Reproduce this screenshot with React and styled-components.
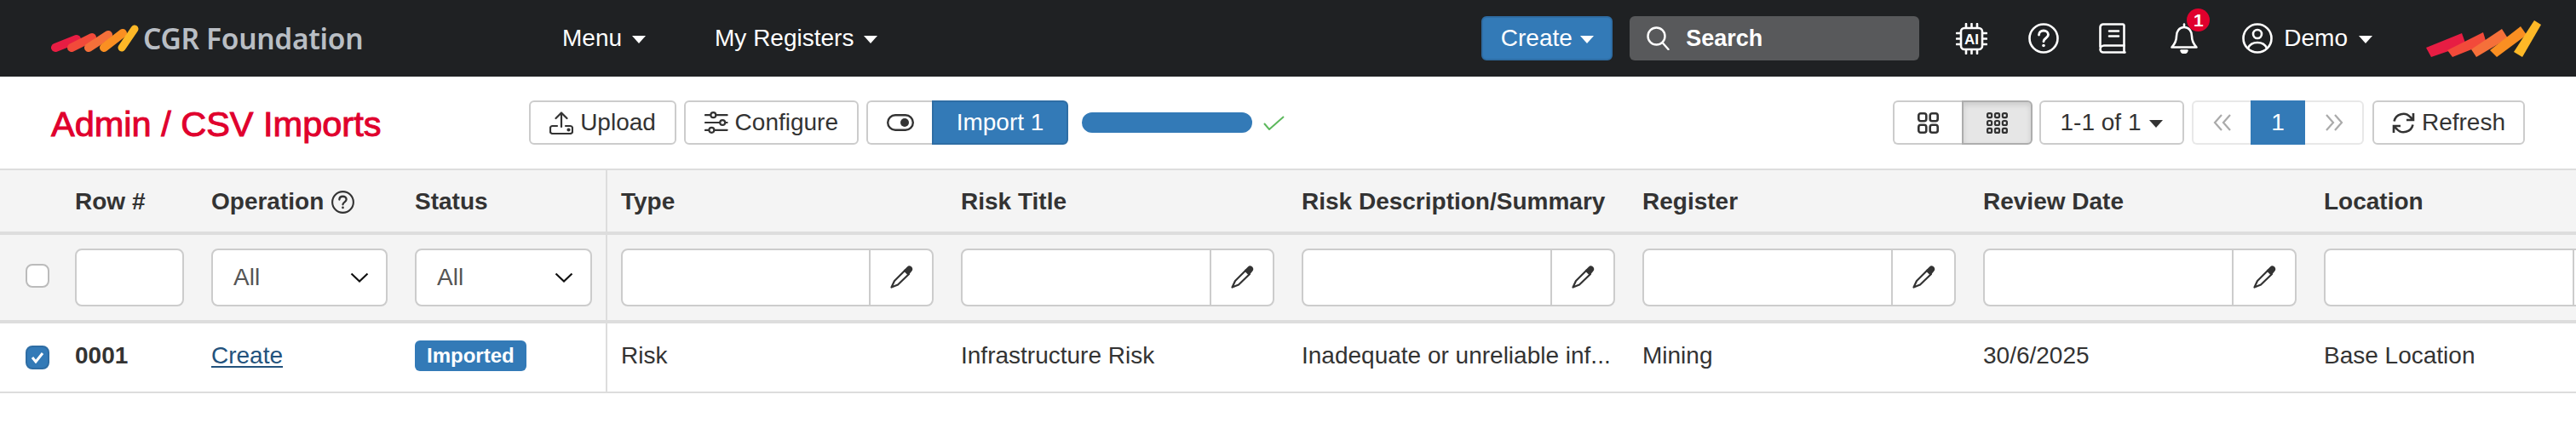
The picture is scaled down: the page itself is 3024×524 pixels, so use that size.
import React from "react";
import styled, { createGlobalStyle } from "styled-components";

const Global = createGlobalStyle`
  html, body { margin: 0; padding: 0; background: #fff; overflow: hidden; }
  body { font-family: "Liberation Sans", Arial, sans-serif; font-size: 28px; color: #333; }
  * { box-sizing: border-box; }
`;

const Page = styled.div`width: 3024px; height: 524px; overflow: hidden; background: #fff;`;

/* ---------- navbar ---------- */
const Navbar = styled.header`
  height: 90px; background: #1f2123; display: flex; align-items: center;
  padding: 0 41px 0 60px; color: #fff;
`;
const Brand = styled.div`display: flex; align-items: center; width: 600px; flex: none;`;
const BrandName = styled.span`
  font-family: "Noto Sans", sans-serif; font-size: 33.5px; font-weight: 600; color: #b9bec4;
  margin-left: 4px; letter-spacing: -0.3px; line-height: 40px;
`;
const NavLink = styled.span`
  display: inline-flex; align-items: center; gap: 12px; font-size: 28px; color: #fff;
  margin-right: ${(p) => p.$mr || 0}px; margin-top: -1px;
`;
const Caret = styled.i`
  display: inline-block; width: 0; height: 0; flex: none; margin-top: ${(p) => p.$mt ?? 3}px;
  border-left: 8px solid transparent; border-right: 8px solid transparent;
  border-top: 9px solid ${(p) => p.$color || "#fff"};
`;
const NavRight = styled.div`margin-left: auto; display: flex; align-items: center;`;
const CreateBtn = styled.button`
  width: 154px; height: 52px; background: #337ab7; border: 2px solid #2e6da4; border-radius: 6px;
  color: #fff; font: 28px "Liberation Sans", Arial, sans-serif; display: flex; align-items: center;
  justify-content: center; gap: 9px; padding: 0;
`;
const SearchBox = styled.div`
  width: 340px; height: 52px; background: #58595b; border-radius: 6px; margin: 0 43px 0 20px;
  display: flex; align-items: center; gap: 19px; padding-left: 20px; font-weight: 700; font-size: 27px;
`;
const NavIcons = styled.div`display: flex; align-items: center;`;
const IconSlot = styled.span`
  position: relative; display: flex; margin-right: ${(p) => p.$mr || 0}px;
`;
const Badge = styled.span`
  position: absolute; left: 19px; top: -17px; width: 27px; height: 27px; border-radius: 50%;
  background: #e0002d; color: #fff; font-weight: 700; font-size: 21px; line-height: 27px; text-align: center;
`;
const UserName = styled.span`
  display: inline-flex; align-items: center; gap: 13px; font-size: 28px; margin: 0 63px 0 13px;
`;

/* ---------- toolbar ---------- */
const Toolbar = styled.div`
  height: 108px; display: flex; align-items: flex-start; padding: 28px 60px 0;
`;
const Title = styled.h1`
  margin: 0; width: 561px; flex: none; font-size: 41.5px; font-weight: 400; color: #e0002d;
  line-height: 56px; -webkit-text-stroke: 1px #e0002d;
`;
const ToolGroup = styled.div`display: flex; align-items: center;`;
const Btn = styled.button`
  height: 52px; background: #fff; border: 2px solid #ccc; border-radius: 6px; color: #333;
  font: 28px "Liberation Sans", Arial, sans-serif; display: inline-flex; align-items: center;
  justify-content: center; gap: ${(p) => p.$gap ?? 8}px; padding: 0 ${(p) => p.$px ?? 22}px;
  width: ${(p) => (p.$w ? `${p.$w}px` : "auto")};
  margin-right: ${(p) => p.$mr || 0}px; flex: none;
`;
const ToggleBtn = styled(Btn)`
  width: 77px; border-right: 0; border-radius: 6px 0 0 6px; padding: 0;
`;
const ImportBtn = styled(Btn)`
  width: 160px; background: #337ab7; border-color: #2e6da4; color: #fff; border-radius: 0 6px 6px 0; padding: 0;
`;
const Progress = styled.div`
  width: 200px; height: 24px; border-radius: 12px; background: #337ab7; margin: 0 13px 0 16px;
`;
const RightTools = styled.div`margin-left: auto; display: flex; align-items: center;`;
const ViewBtn = styled.button`
  width: ${(p) => p.$w}px; height: 52px; display: flex; align-items: center; justify-content: center; padding: 0;
  background: ${(p) => (p.$active ? "#e6e6e6" : "#fff")}; color: #333;
  border: 2px solid ${(p) => (p.$active ? "#adadad" : "#ccc")};
  box-shadow: ${(p) => (p.$active ? "inset 0 3px 6px rgba(0,0,0,.125)" : "none")};
  border-radius: ${(p) => (p.$active ? "0 6px 6px 0" : "6px 0 0 6px")};
  ${(p) => (p.$active ? "" : "border-right: 0;")}
`;
const ViewGroup = styled.div`display: flex; margin-right: 8px;`;
const Pager = styled.div`display: flex; height: 52px; margin-right: 10px;`;
const PageArrow = styled.span`
  width: ${(p) => p.$w}px; display: flex; align-items: center; justify-content: center;
  border: 2px solid #e8e8e8; background: #fff; color: #aaa;
  border-radius: ${(p) => (p.$side === "left" ? "6px 0 0 6px" : "0 6px 6px 0")};
  ${(p) => (p.$side === "left" ? "border-right: 0;" : "border-left: 0;")}
`;
const PageCurrent = styled.span`
  width: 64px; background: #337ab7; color: #fff; display: flex; align-items: center; justify-content: center; font-size: 28px;
`;

/* ---------- table ---------- */
const COLS = "72px 160px 239px 242px 399px 400px 400px 400px 400px 400px";
const Table = styled.div`width: 3112px; border-top: 2px solid #ddd;`;
const Row = styled.div`
  display: grid; grid-template-columns: ${COLS};
  height: ${(p) => p.$h}px; background: ${(p) => p.$bg || "#fff"};
  border-bottom: ${(p) => p.$bb}px solid #ddd;
`;
const Cell = styled.div`
  display: flex; align-items: center; padding: 0 16px; min-width: 0;
  ${(p) => (p.$sep ? "border-right: 2px solid #ddd;" : "")}
`;
const HeadCell = styled(Cell)`font-weight: 700; gap: 9px; color: #333; padding-top: 2px;`;
const BodyCell = styled(Cell)`
  padding-bottom: 4px; font-weight: ${(p) => (p.$bold ? 700 : 400)}; white-space: nowrap;
`;
const CheckCell = styled.div`display: flex; align-items: center; padding: 0 0 ${(p) => p.$pb || 0}px 30px;`;
const Check = styled.span`
  width: 28px; height: 28px; border-radius: 8px; display: flex; align-items: center; justify-content: center;
  border: 2px solid ${(p) => (p.$on ? "#2e6da4" : "#bbb")}; background: ${(p) => (p.$on ? "#337ab7" : "#fff")};
`;
const FilterInput = styled.div`
  width: 100%; height: 68px; background: #fff; border: 2px solid #ccc; border-radius: 8px; flex: none;
`;
const FilterSelect = styled(FilterInput)`
  display: flex; align-items: center; justify-content: space-between; padding: 0 20px 0 24px; color: #555;
`;
const FilterGroup = styled(FilterInput)`
  display: flex; justify-content: flex-end;
`;
const Addon = styled.span`
  width: 74px; border-left: 2px solid #ccc; display: flex; align-items: center; justify-content: center;
`;
const Link = styled.a`color: #23527c; text-decoration: underline; text-underline-offset: 3px;`;
const Label = styled.span`
  display: inline-block; background: #337ab7; color: #fff; font-weight: 700; font-size: 24px;
  height: 36px; line-height: 36px; padding: 0 14px; border-radius: 6px;
`;

/* ---------- drawings ---------- */
const LogoSmall = () => (
  <svg width="104" height="34" viewBox="60 28 104 34" fill="none" strokeWidth="10" strokeLinecap="round">
    <path d="M65 56 L90 46" stroke="#e71d43" />
    <path d="M84 56 L108 44" stroke="#f24a3a" />
    <path d="M104 56 L127 41" stroke="#f5703a" />
    <path d="M122 56 L144 39" stroke="#fa8f22" />
    <path d="M143 56 L158 34" stroke="#fdb827" strokeWidth="9" />
  </svg>
);
const LogoLarge = () => (
  <svg width="135" height="43" viewBox="2848 23 135 43">
    <polygon points="2848,55 2890,38 2895,52 2854,66" fill="#e71d43" />
    <polygon points="2873,58 2915,37 2919,50 2879,66" fill="#f24a3a" />
    <polygon points="2901,57 2937,33 2944,44 2907,66" fill="#f5703a" />
    <polygon points="2923,58 2959,30 2966,40 2931,66" fill="#fa8f22" />
    <polygon points="2951,60 2975,23 2983,28 2961,66" fill="#fdb827" />
  </svg>
);
const AiIcon = () => (
  <svg width="37" height="37" viewBox="0 0 37 37" fill="none" stroke="#fff" strokeWidth="2.6" strokeLinecap="round">
    <rect x="6" y="6" width="25" height="25" rx="4" />
    <path d="M12 1v4M18.5 1v4M25 1v4M12 32v4M18.5 32v4M25 32v4M1 12h4M1 18.5h4M1 25h4M32 12h4M32 18.5h4M32 25h4" />
    <text x="18.5" y="24.5" textAnchor="middle" fill="#fff" stroke="none" fontFamily="Liberation Sans" fontWeight="700" fontSize="17">AI</text>
  </svg>
);
const QuestionIcon = ({ size = 36, color = "#fff", sw = 2.6 }) => (
  <svg width={size} height={size} viewBox="0 0 36 36" fill="none" stroke={color} strokeWidth={sw} strokeLinecap="round">
    <circle cx="18" cy="18" r="16.5" />
    <path d="M12.5 14c0-3.2 2.5-5 5.5-5s5.5 1.9 5.500 4.800c0 3.900-5.500 4-5.500 8" strokeWidth={sw * 1.1} />
    <circle cx="18" cy="26.5" r="1.8" fill={color} stroke="none" />
  </svg>
);
const BookIcon = () => (
  <svg width="32" height="36" viewBox="0 0 32 36" fill="none" stroke="#fff" strokeWidth="2.6" strokeLinecap="round" strokeLinejoin="round">
    <path d="M1.5 28V5a3.5 3.5 0 0 1 3.5-3.5h23a1.5 1.5 0 0 1 1.5 1.5v23.5H6a4.5 4.500 0 0 0-4.500 4.500 3.500 3.500 0 0 0 3.500 3.500h25.500" />
    <path d="M29.5 26.5v8M12 9.5h11M12 15.5h11" />
  </svg>
);
const BellIcon = () => (
  <svg width="32" height="36" viewBox="0 0 32 36" fill="none" stroke="#fff" strokeWidth="2.6" strokeLinecap="round" strokeLinejoin="round">
    <path d="M16 1.5v3.5M16 5C10 5 7 10 7 15.5c0 5-1.5 8.5-5.5 13h29c-4-4.5-5.5-8-5.5-13C25 10 22 5 16 5Z" />
    <path d="M12.500 32.500h7c-.5 1.800-2 2.500-3.500 2.500s-3-.7-3.500-2.500Z" fill="#fff" />
  </svg>
);
const AvatarIcon = () => (
  <svg width="36" height="36" viewBox="0 0 36 36" fill="none" stroke="#fff" strokeWidth="2.6" strokeLinecap="round">
    <circle cx="18" cy="18" r="16.5" />
    <circle cx="18" cy="13" r="5" />
    <path d="M7 29.500c2-4.500 6-6.500 11-6.500s9 2 11 6.500" />
  </svg>
);
const SearchIcon = () => (
  <svg width="27" height="28" viewBox="0 0 27 28" fill="none" stroke="#fff" strokeWidth="2.4" strokeLinecap="round">
    <circle cx="11.500" cy="11.500" r="10" />
    <path d="M18.500 19l7 8" />
  </svg>
);
const UploadIcon = () => (
  <svg width="28" height="27" viewBox="0 0 28 27" fill="none" stroke="#333" strokeWidth="2.2" strokeLinecap="round" strokeLinejoin="round">
    <path d="M14 1.500V18M7.500 8L14 1.500 20.500 8" />
    <path d="M9 17H3.500A2.500 2.500 0 0 0 1 19.500v4A2.500 2.500 0 0 0 3.500 26h21a2.500 2.500 0 0 0 2.500-2.500v-4a2.500 2.500 0 0 0-2.500-2.500H19" />
    <circle cx="22.500" cy="21.500" r="1" fill="#333" />
  </svg>
);
const SlidersIcon = () => (
  <svg width="28" height="26" viewBox="0 0 28 26" fill="none" stroke="#333" strokeWidth="2.2" strokeLinecap="round">
    <path d="M1 4h6M14 4h13M1 13h17M25 13h2M1 22h4M12 22h15" />
    <circle cx="10.500" cy="4" r="3" />
    <circle cx="21.500" cy="13" r="3" />
    <circle cx="8.500" cy="22" r="3" />
  </svg>
);
const ToggleIcon = () => (
  <svg width="32" height="20" viewBox="0 0 32 20" fill="none" stroke="#333" strokeWidth="2.400">
    <rect x="1.200" y="1.200" width="29.600" height="17.600" rx="8.800" />
    <circle cx="21" cy="10" r="5" fill="#333" stroke="none" />
  </svg>
);
const CheckMark = () => (
  <svg width="25" height="17" viewBox="0 0 25 17" fill="none" stroke="#5cb85c" strokeWidth="2">
    <path d="M1 9l6 7L24 1" />
  </svg>
);
const Grid2 = () => (
  <svg width="25" height="25" viewBox="0 0 25 25" fill="none" stroke="#333" strokeWidth="2.600">
    {[1.3, 14.7].map((y) => [1.3, 14.7].map((x) => <rect key={`${x}-${y}`} x={x} y={y} width="9" height="9" rx="2.500" />))}
  </svg>
);
const Grid3 = () => (
  <svg width="25" height="25" viewBox="0 0 25 25" fill="none" stroke="#333" strokeWidth="2.200">
    {[1.1, 10, 18.9].map((y) => [1.1, 10, 18.9].map((x) => <rect key={`${x}-${y}`} x={x} y={y} width="5" height="5" rx="1.500" />))}
  </svg>
);
const ChevronsLeft = () => (
  <svg width="22" height="20" viewBox="0 0 22 20" fill="none" stroke="#aaa" strokeWidth="2.200">
    <path d="M10 1L2 10l8 9M20 1l-8 9 8 9" />
  </svg>
);
const ChevronsRight = () => (
  <svg width="22" height="20" viewBox="0 0 22 20" fill="none" stroke="#aaa" strokeWidth="2.200">
    <path d="M12 1l8 9-8 9M2 1l8 9-8 9" />
  </svg>
);
const RefreshIcon = () => (
  <svg width="27" height="27" viewBox="0 0 27 27" fill="none" stroke="#333" strokeWidth="2.600" strokeLinejoin="miter">
    <path d="M2.500 11.500A11 11 0 0 1 21.500 6.500L25 10" />
    <path d="M25 2v8h-8" />
    <path d="M24.500 15.500A11 11 0 0 1 5.500 20.500L2 17" />
    <path d="M2 25v-8h8" />
  </svg>
);
const Pencil = () => (
  <svg width="28" height="28" viewBox="0 0 28 28" fill="none" stroke="#333" strokeWidth="2.200" strokeLinejoin="round">
    <path d="M6 18L18.500 5.500l4.500 4.500L10 22.500 2.500 25.500Z" />
    <path d="M18 6l3.500-3.500c1.500-1.500 3-1.300 4 0s.8 2.700-.5 4L22 10Z" fill="#333" />
  </svg>
);
const Chevron = () => (
  <svg width="22" height="12" viewBox="0 0 22 12" fill="none" stroke="#111" strokeWidth="2.200">
    <path d="M1.500 1.500L11 10.500l9.500-9" />
  </svg>
);
const Tick = () => (
  <svg width="16" height="14" viewBox="0 0 16 14" fill="none" stroke="#fff" strokeWidth="3">
    <path d="M2 7l4 5 8-10" />
  </svg>
);

const TEXT_COLS = [
  { head: "Type", value: "Risk" },
  { head: "Risk Title", value: "Infrastructure Risk" },
  { head: "Risk Description/Summary", value: "Inadequate or unreliable inf..." },
  { head: "Register", value: "Mining" },
  { head: "Review Date", value: "30/6/2025" },
  { head: "Location", value: "Base Location" },
];

export default function App() {
  return (
    <Page>
      <Global />
      <Navbar>
        <Brand>
          <LogoSmall />
          <BrandName>CGR Foundation</BrandName>
        </Brand>
        <NavLink $mr={81}>Menu <Caret /></NavLink>
        <NavLink>My Registers <Caret /></NavLink>
        <NavRight>
          <CreateBtn>Create <Caret /></CreateBtn>
          <SearchBox><SearchIcon />Search</SearchBox>
          <NavIcons>
            <IconSlot $mr={48}><AiIcon /></IconSlot>
            <IconSlot $mr={47}><QuestionIcon /></IconSlot>
            <IconSlot $mr={52}><BookIcon /></IconSlot>
            <IconSlot $mr={52}><BellIcon /><Badge>1</Badge></IconSlot>
            <IconSlot><AvatarIcon /></IconSlot>
            <UserName>Demo <Caret /></UserName>
            <LogoLarge />
          </NavIcons>
        </NavRight>
      </Navbar>

      <Toolbar>
        <Title>Admin / CSV Imports</Title>
        <ToolGroup>
          <Btn $mr={9} $w={173}><UploadIcon />Upload</Btn>
          <Btn $mr={9} $w={205}><SlidersIcon />Configure</Btn>
          <ToggleBtn><ToggleIcon /></ToggleBtn>
          <ImportBtn>Import 1</ImportBtn>
          <Progress />
          <CheckMark />
        </ToolGroup>
        <RightTools>
          <ViewGroup>
            <ViewBtn $w={81}><Grid2 /></ViewBtn>
            <ViewBtn $w={83} $active><Grid3 /></ViewBtn>
          </ViewGroup>
          <Btn $mr={9} $gap={10} $w={170} $px={0}>1-1 of 1 <Caret $color="#333" /></Btn>
          <Pager>
            <PageArrow $w={69} $side="left"><ChevronsLeft /></PageArrow>
            <PageCurrent>1</PageCurrent>
            <PageArrow $w={69} $side="right"><ChevronsRight /></PageArrow>
          </Pager>
          <Btn $gap={8} $w={179} $px={0}><RefreshIcon />Refresh</Btn>
        </RightTools>
      </Toolbar>

      <Table>
        <Row $h={76} $bb={4} $bg="#f4f4f4">
          <Cell />
          <HeadCell>Row #</HeadCell>
          <HeadCell>Operation <QuestionIcon size={27} color="#333" sw={2.8} /></HeadCell>
          <HeadCell $sep>Status</HeadCell>
          {TEXT_COLS.map((c) => <HeadCell key={c.head}>{c.head}</HeadCell>)}
        </Row>
        <Row $h={104} $bb={4} $bg="#f4f4f4">
          <CheckCell $pb={4}><Check /></CheckCell>
          <Cell><FilterInput /></Cell>
          <Cell><FilterSelect>All <Chevron /></FilterSelect></Cell>
          <Cell $sep><FilterSelect>All <Chevron /></FilterSelect></Cell>
          {TEXT_COLS.map((c) => (
            <Cell key={c.head}>
              <FilterGroup>
                <Addon><Pencil /></Addon>
              </FilterGroup>
            </Cell>
          ))}
        </Row>
        <Row $h={82} $bb={2}>
          <CheckCell><Check $on><Tick /></Check></CheckCell>
          <BodyCell $bold>0001</BodyCell>
          <BodyCell><Link>Create</Link></BodyCell>
          <BodyCell $sep><Label>Imported</Label></BodyCell>
          {TEXT_COLS.map((c) => <BodyCell key={c.head}>{c.value}</BodyCell>)}
        </Row>
      </Table>
    </Page>
  );
}
